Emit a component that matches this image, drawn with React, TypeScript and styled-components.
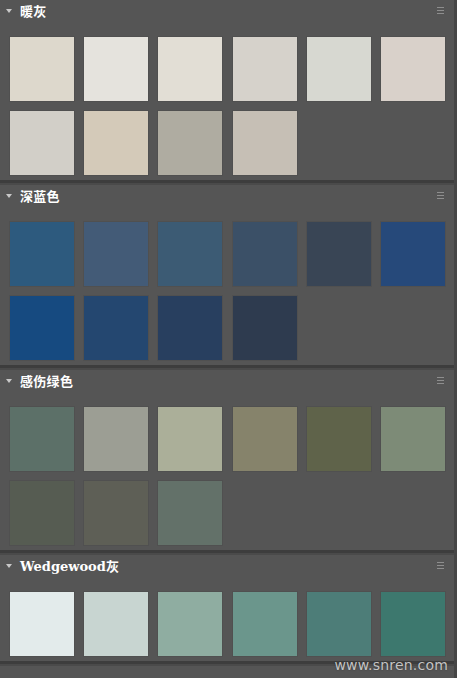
import * as React from 'react';
import styled, { createGlobalStyle } from 'styled-components';

const GlobalStyle = createGlobalStyle`
  html, body {
    margin: 0;
    padding: 0;
    background: #4a4a4a;
  }
  body {
    width: 457px;
    height: 678px;
    overflow: hidden;
    font-family: "Noto Sans CJK SC", "Noto Sans", sans-serif;
  }
`;

const Page = styled.div`
  position: relative;
  width: 457px;
  height: 678px;
  overflow: hidden;
  background: #555555;
  border-right: 3px solid #464646;
  box-sizing: border-box;
`;

const Panel = styled.section`
  display: flex;
  flex-direction: column;
  border-bottom: 3px solid #3d3d3d;
  box-shadow: 0 2px 0 #4a4a4a;
  margin-bottom: 2px;
  padding-bottom: 5px;
`;

const Header = styled.div`
  display: flex;
  align-items: center;
  height: 22px;
  padding: 0 6px 0 6px;
  margin-bottom: 15px;
`;

const Arrow = styled.span`
  width: 0;
  height: 0;
  border-left: 3px solid transparent;
  border-right: 3px solid transparent;
  border-top: 4px solid #c8c8c8;
  margin-right: 8px;
`;

const Title = styled.span`
  flex: 1;
  color: #ffffff;
  font-weight: 700;
  font-size: 13px;
  line-height: 16px;
  letter-spacing: 0.3px;
  .latin {
    font-family: "DejaVu Serif", "Liberation Serif", serif;
    font-weight: 700;
    letter-spacing: 0;
  }
`;

const Grip = styled.svg`
  width: 7px;
  height: 7px;
  margin-right: 4px;
  margin-top: -2px;
`;

const Grid = styled.div`
  display: grid;
  grid-template-columns: repeat(6, 64px);
  grid-auto-rows: 64px;
  column-gap: 10.2px;
  row-gap: 10px;
  padding: 0 10px;
`;

const Swatch = styled.div<{ $color: string }>`
  background: ${p => p.$color};
  box-shadow: 0 0 0 1px rgba(0, 0, 0, 0.05);
`;

const Watermark = styled.div`
  position: absolute;
  right: 6px;
  bottom: 5px;
  font-family: "DejaVu Sans", "Liberation Sans", sans-serif;
  font-size: 14px;
  color: #c4c4c4;
  letter-spacing: 0.2px;
  text-shadow: 0 0 2px rgba(0, 0, 0, 0.4);
`;

const groups: { title: React.ReactNode; colors: string[] }[] = [
  {
    title: '暖灰',
    colors: ['#ddd8cc', '#e5e3dd', '#e2ded5', '#d6d2cb', '#d7d8d1', '#d9d1ca', '#d2cfc8', '#d4cab9', '#afaca1', '#c6bfb5'],
  },
  {
    title: '深蓝色',
    colors: ['#2d5a7e', '#435b77', '#3c5b74', '#3b5067', '#394555', '#26497a', '#164a80', '#244770', '#283f5f', '#2e3b4f'],
  },
  {
    title: '感伤绿色',
    colors: ['#5c7068', '#9c9e94', '#abaf99', '#86836b', '#5f634a', '#7d8b77', '#565c52', '#5e5f56', '#637169'],
  },
  {
    title: (
      <>
        <span className="latin">Wedgewood</span>灰
      </>
    ),
    colors: ['#e3ebeb', '#c8d5d1', '#8fada1', '#6b968c', '#4d7d78', '#3d786e'],
  },
];

const GripIcon = () => (
  <Grip viewBox="0 0 7 7">
    <rect x="0" y="0" width="7" height="1" fill="#8e8e8e" />
    <rect x="0" y="3" width="7" height="1" fill="#8e8e8e" />
    <rect x="0" y="6" width="7" height="1" fill="#8e8e8e" />
  </Grip>
);

const App = () => (
  <>
    <GlobalStyle />
    <Page>
      {groups.map((g, i) => (
        <Panel key={i}>
          <Header>
            <Arrow />
            <Title>{g.title}</Title>
            <GripIcon />
          </Header>
          <Grid>
            {g.colors.map(c => (
              <Swatch key={c} $color={c} />
            ))}
          </Grid>
        </Panel>
      ))}
      <Watermark>www.snren.com</Watermark>
    </Page>
  </>
);

export default App;
